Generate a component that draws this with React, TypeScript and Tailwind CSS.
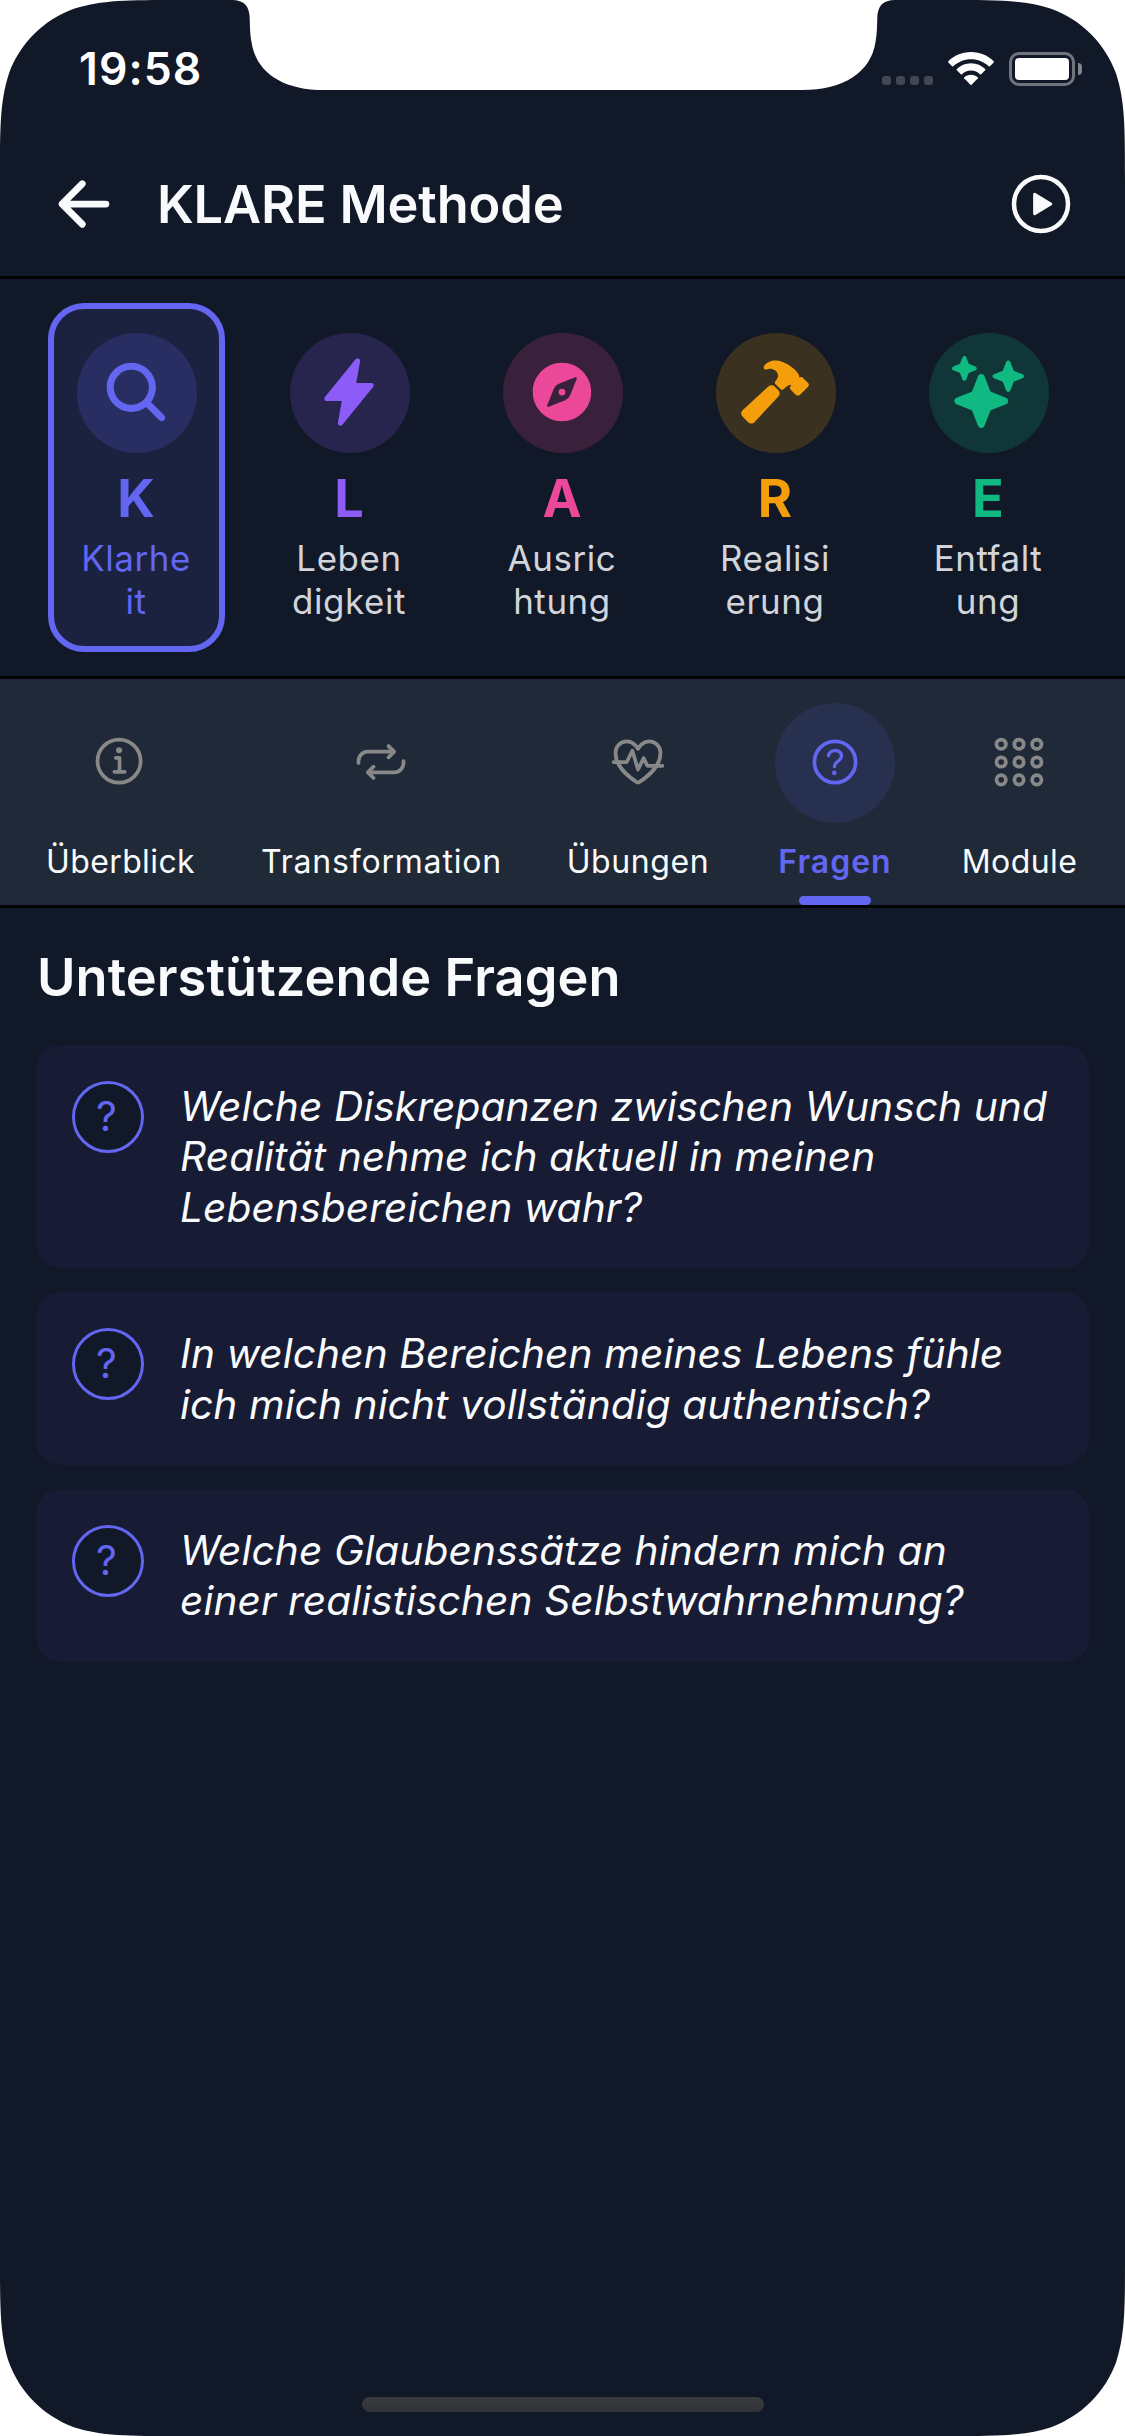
import type { ComponentType } from "react";
import {
  IoAppsOutline,
  IoArrowBack,
  IoCompass,
  IoFitnessOutline,
  IoFlash,
  IoHammer,
  IoHelpCircleOutline,
  IoInformationCircleOutline,
  IoPlayCircleOutline,
  IoRepeatOutline,
  IoSearch,
  IoSparkles,
} from "react-icons/io5";

type Icon = ComponentType<{ className?: string }>;

const steps: { letter: string; lines: [string, string]; icon: Icon; color: string; circle: string; active?: boolean }[] = [
  { letter: "K", lines: ["Klarhe", "it"], icon: IoSearch, color: "text-[#6366f1]", circle: "bg-[#6366f130]", active: true },
  { letter: "L", lines: ["Leben", "digkeit"], icon: IoFlash, color: "text-[#8b5cf6]", circle: "bg-[#8b5cf630]" },
  { letter: "A", lines: ["Ausric", "htung"], icon: IoCompass, color: "text-[#ec4899]", circle: "bg-[#ec489930]" },
  { letter: "R", lines: ["Realisi", "erung"], icon: IoHammer, color: "text-[#f59e0b]", circle: "bg-[#f59e0b30]" },
  { letter: "E", lines: ["Entfalt", "ung"], icon: IoSparkles, color: "text-[#10b981]", circle: "bg-[#10b98130]" },
];

const tabs: { label: string; icon: Icon; width: string; tracking: string; active?: boolean }[] = [
  { label: "Überblick", icon: IoInformationCircleOutline, width: "w-[151px]", tracking: "tracking-[0.4px]" },
  { label: "Transformation", icon: IoRepeatOutline, width: "w-[239px]", tracking: "tracking-[0.8px]" },
  { label: "Übungen", icon: IoFitnessOutline, width: "w-[142px]", tracking: "tracking-[0.6px]" },
  { label: "Fragen", icon: IoHelpCircleOutline, width: "w-[120px]", tracking: "tracking-[1px]", active: true },
  { label: "Module", icon: IoAppsOutline, width: "w-[117px]", tracking: "tracking-[0.4px]" },
];

const questions: string[][] = [
  ["Welche Diskrepanzen zwischen Wunsch und", "Realität nehme ich aktuell in meinen", "Lebensbereichen wahr?"],
  ["In welchen Bereichen meines Lebens fühle", "ich mich nicht vollständig authentisch?"],
  ["Welche Glaubenssätze hindern mich an", "einer realistischen Selbstwahrnehmung?"],
];

function StatusBar() {
  return (
    <div className="flex h-[132px] justify-between pr-[43px] pl-[79px]">
      <div className="mt-[45px] text-[44.5px] leading-[48px] font-semibold tracking-[1.1px] text-white">19:58</div>
      <div className="mt-[52px] flex h-[34px]">
        <div className="mt-[24px] mr-[15px] flex gap-[5px]">
          {[0, 1, 2, 3].map((i) => (
            <div key={i} className="size-[9px] rounded-[3px] bg-[#444751]" />
          ))}
        </div>
        <svg className="mr-[15px] h-[33px] w-[46px]" viewBox="0 0 46 33" fill="#fff">
          <path d="M23 0C32 0 40 3.500 45.900 9.500V10.300L41.700 14.500H41C36 10 30 7.300 23 7.300S10 10 5 14.500H4.300L.1 10.300V9.500C6 3.500 14 0 23 0Z" />
          <path d="M23 11.200C28.700 11.200 33.600 13.500 37.400 17.200V17.900L32.900 22.600H32.200C29.800 20.200 26.600 18.600 23 18.600S16.200 20.200 13.800 22.600H13.100L8.600 17.900V17.200C12.400 13.500 17.300 11.200 23 11.200Z" />
          <path d="M23 22.700C25.700 22.700 28 23.700 29.900 25.500V26.200L23.300 33H22.700L16.100 26.200V25.500C18 23.700 20.300 22.700 23 22.700Z" />
        </svg>
        <div className="h-[34px] w-[66px] rounded-[10px] border-[3px] border-[#71747d] p-[3px]">
          <div className="h-full w-full rounded-[4px] bg-white" />
        </div>
        <div className="mt-[11px] ml-[3px] h-[12px] w-[4px] rounded-r-full bg-[#83858b]" />
      </div>
    </div>
  );
}

/* White device corners and notch laid over the screen. */
function ScreenMask() {
  const corner = "M0 0H178.900C127.400 0 101.600 0 73.900 8.800C43.600 19.800 19.800 43.600 8.800 73.900C0 101.600 0 127.400 0 178.900Z";
  return (
    <svg className="pointer-events-none absolute inset-0 h-[2436px] w-[1125px]" viewBox="0 0 1125 2436" fill="#fff">
      <path d={corner} />
      <path d={corner} transform="matrix(-1 0 0 1 1125 0)" />
      <path d={corner} transform="matrix(1 0 0 -1 0 2436)" />
      <path d={corner} transform="matrix(-1 0 0 -1 1125 2436)" />
      <path d="M232 0C244 0 249.500 6 249.700 18C250 28 250 34 251.500 42C256 72 282 90 324 90H802C844 90 871 72 875.500 42C877 34 877 28 877.300 18C877.500 6 883 0 895 0Z" />
    </svg>
  );
}

export default function App() {
  return (
    <div className="relative flex h-[2436px] w-[1125px] flex-col overflow-hidden bg-[#111827] font-['Inter',sans-serif]">
      <StatusBar />
      <header className="flex h-[147px] items-center border-b-[3px] border-black px-[48px]">
        <IoArrowBack className="size-[72px] text-[#f9fafb]" />
        <h1 className="ml-[37px] flex-1 text-[52.3px] leading-[66px] font-semibold tracking-[-0.15px] whitespace-nowrap text-[#f9fafb]">KLARE Methode</h1>
        <IoPlayCircleOutline className="size-[72px] text-[#f9fafb]" />
      </header>

      <section className="flex gap-[36px] border-b-[3px] border-black px-[48px] py-[24px]">
        {steps.map(({ letter, lines, icon: StepIcon, color, circle, active }) => (
          <div
            key={letter}
            className={`flex h-[349px] w-[177px] flex-col items-center rounded-[36px] border-[6px] pt-[24px] ${active ? "border-[#6366f1] bg-[#6366f120]" : "border-transparent"}`}
          >
            <div className={`flex size-[120px] items-center justify-center rounded-full pr-[2px] pb-[2px] ${circle} ${color}`}>
              <StepIcon className="size-[72px]" />
            </div>
            <div className={`mt-[12px] pr-px text-[52.3px] leading-[66px] font-bold ${color}`}>{letter}</div>
            <div className={`mt-[6px] pr-px text-center text-[34.9px] leading-[43px] tracking-[0.6px] ${active ? color : "text-[#d1d5db]"}`}>
              {lines.map((line) => (
                <div key={line}>{line}</div>
              ))}
            </div>
          </div>
        ))}
      </section>

      <nav className="flex h-[229px] gap-[66px] border-b-[3px] border-black bg-[#1f2937] pt-[24px] pl-[45px]">
        {tabs.map(({ label, icon: TabIcon, width, tracking, active }) => (
          <div key={label} className={`flex shrink-0 flex-col items-center ${width}`}>
            <div className={`flex size-[120px] items-center justify-center rounded-full pr-px pb-[2px] ${active ? "bg-[#6366f120] text-[#6366f1]" : "text-[#888888]"}`}>
              <TabIcon className="size-[60px]" />
            </div>
            <div className={`mt-[15px] text-[32px] leading-[48px] whitespace-nowrap ${tracking} ${active ? "font-semibold text-[#6366f1]" : "text-[#f9fafb]"}`}>{label}</div>
            {active && <div className="mt-[10px] h-[9px] w-[72px] rounded-[4.5px] bg-[#6366f1]" />}
          </div>
        ))}
      </nav>

      <main className="flex flex-1 flex-col px-[36px] pt-[36px]">
        <h2 className="mb-[35px] ml-px text-[52.3px] leading-[66px] font-semibold tracking-[0.1px] whitespace-nowrap text-[#f9fafb]">Unterstützende Fragen</h2>
        <div className="flex flex-col gap-[24px]">
          {questions.map((lines) => (
            <div key={lines[0]} className="flex rounded-[24px] bg-[#171b33] p-[36px]">
              <div className="flex size-[72px] shrink-0 items-center justify-center rounded-full border-[3px] border-[#6366f1] bg-[#111827] pr-[3px] text-[40.7px] leading-[50px] text-[#6366f1]">
                ?
              </div>
              <div className="-mb-px ml-[36px] pt-px text-[40.7px] leading-[50.4px] tracking-[0.07px] whitespace-nowrap text-[#f9fafb] italic">
                {lines.map((line) => (
                  <div key={line}>{line}</div>
                ))}
              </div>
            </div>
          ))}
        </div>
      </main>

      <div className="mx-auto mb-[24px] h-[15px] w-[402px] rounded-full bg-linear-to-b from-[#3a3b3d] to-[#31333a]" />
      <ScreenMask />
    </div>
  );
}
